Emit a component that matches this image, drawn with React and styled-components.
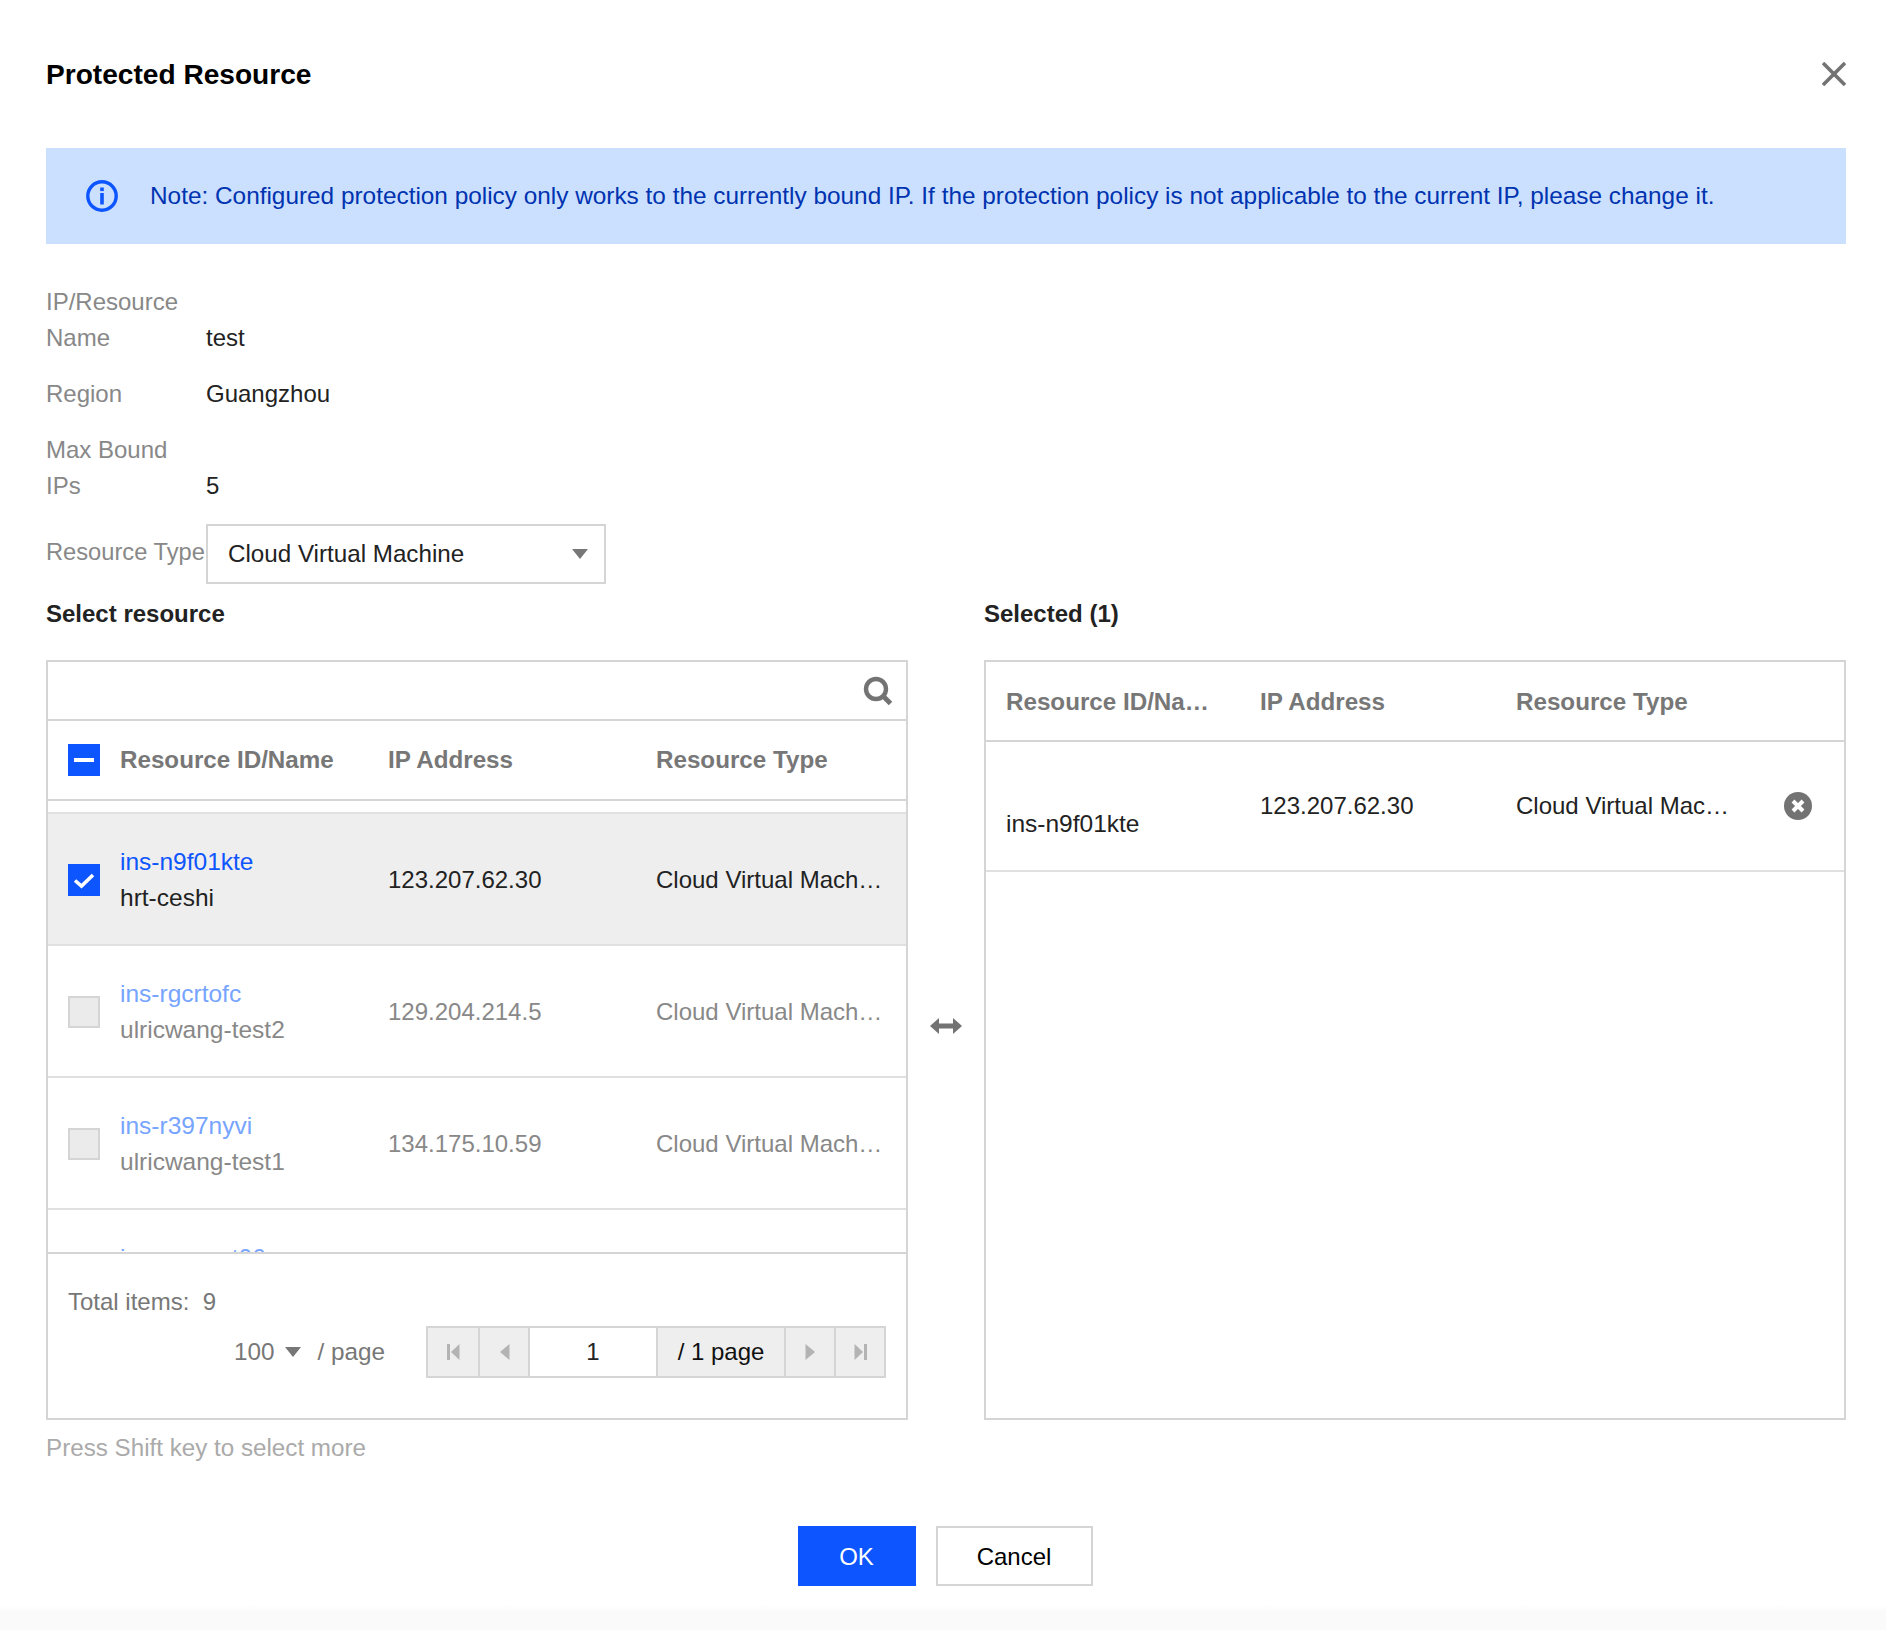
import React from "react";
import styled, { createGlobalStyle } from "styled-components";

const Global = createGlobalStyle`
  html, body { margin: 0; padding: 0; background: #fff; }
  body { font-family: "Liberation Sans", Arial, sans-serif; font-size: 24px; line-height: 36px; color: #222; }
  * { box-sizing: border-box; }
`;

const BORDER = "#d5d5d5";
const BLUE = "#0d55ff";

const Page = styled.div`
  width: 1886px;
  height: 1630px;
  padding: 0 40px 0 46px;
  background: linear-gradient(#fff 1605px, #fafafa 1612px);
  overflow: hidden;
`;
const Header = styled.header`
  height: 148px;
  display: flex;
  justify-content: space-between;
  align-items: flex-start;
  padding-top: 57px;
`;
const Title = styled.h1`
  margin: 0;
  font-size: 28.1px;
  line-height: 36px;
  font-weight: 700;
  color: #000;
`;
const CloseBtn = styled.button`
  border: 0;
  background: none;
  padding: 0;
  margin: 5px 0 0 0;
  width: 24px;
  height: 24px;
  display: block;
  svg { display: block; }
`;
const Notice = styled.div`
  width: 1800px;
  height: 96px;
  background: #cbe0ff;
  color: #0033b0;
  font-size: 24.37px;
  display: flex;
  align-items: center;
  gap: 32px;
  padding-left: 40px;
  svg { flex: none; }
`;
const InfoList = styled.dl`
  margin: 40px 0 0 0;
  display: grid;
  grid-template-columns: 160px 1fr;
  row-gap: 20px;
  align-items: end;
`;
const Label = styled.dt`
  margin: 0;
  color: #888;
  width: 140px;
`;
const SelectLabel = styled(Label)`
  align-self: center;
  white-space: nowrap;
  font-size: 23.7px;
  margin-top: -4px;
`;
const Value = styled.dd`
  margin: 0;
  color: #222;
`;
const Select = styled.div`
  width: 400px;
  height: 60px;
  border: 2px solid ${BORDER};
  display: flex;
  align-items: center;
  justify-content: space-between;
  padding: 0 16px 0 20px;
  font-size: 24.2px;
  color: #222;
`;
const Columns = styled.div`
  width: 1800px;
  margin-top: 12px;
  display: grid;
  grid-template-columns: 862px 76px 862px;
`;
const Side = styled.section`
  display: flex;
  flex-direction: column;
`;
const SideTitle = styled.h2`
  margin: 0 0 28px 0;
  font-size: 24px;
  line-height: 36px;
  font-weight: 700;
  color: #222;
`;
const Panel = styled.div`
  height: 760px;
  border: 2px solid ${BORDER};
  display: flex;
  flex-direction: column;
`;
const SearchBar = styled.div`
  height: 59px;
  flex: none;
  border-bottom: 2px solid ${BORDER};
  display: flex;
  align-items: center;
  justify-content: flex-end;
  padding-right: 13px;
`;
const LeftGrid = styled.div`
  display: grid;
  grid-template-columns: 72px 268px 268px 230px;
  align-items: center;
`;
const HeadRow = styled(LeftGrid)`
  height: 80px;
  flex: none;
  border-bottom: 2px solid ${BORDER};
  color: #777;
  font-weight: 700;
  font-size: 24.2px;
`;
const List = styled.div`
  flex: 1;
  min-height: 0;
  overflow: hidden;
  padding-top: 11px;
  border-bottom: 2px solid ${BORDER};
`;
const Row = styled(LeftGrid)`
  height: ${(p) => (p.$first ? 134 : 132)}px;
  padding-top: 2px;
  border-top: ${(p) => (p.$first ? `2px solid #e0e0e0` : "0")};
  border-bottom: 2px solid #e0e0e0;
  background: ${(p) => (p.$selected ? "#eeeeee" : "#fff")};
  color: ${(p) => (p.$muted ? "#888" : "#222")};
`;
const IdCell = styled.div`
  display: flex;
  flex-direction: column;
  font-size: 24.5px;
`;
const IdLink = styled.span`
  color: ${(p) => (p.$muted ? "#76a4ff" : BLUE)};
`;
const IdName = styled.span`
  min-height: 36px;
`;
const TypeCell = styled.div`
  overflow: hidden;
  white-space: nowrap;
  text-overflow: ellipsis;
  min-width: 0;
`;
const CheckCell = styled.div`
  padding-left: 20px;
  display: flex;
`;
const Check = styled.span`
  width: 32px;
  height: 32px;
  display: flex;
  align-items: center;
  justify-content: center;
  background: ${(p) => (p.$disabled ? "#ebebeb" : BLUE)};
  border: ${(p) => (p.$disabled ? `2px solid ${BORDER}` : "0")};
`;
const Footer = styled.div`
  flex: none;
  height: 164px;
  padding: 30px 20px 0 20px;
  color: #777;
`;
const Total = styled.div`
  height: 36px;
`;
const PagerLine = styled.div`
  margin-top: 6px;
  display: flex;
  align-items: center;
  justify-content: flex-end;
`;
const PageSize = styled.div`
  display: flex;
  align-items: center;
  margin-right: 41px;
  font-size: 24.3px;
`;
const SizeValue = styled.span`
  margin-right: 11px;
`;
const SizeSuffix = styled.span`
  margin-left: 16px;
`;
const Pager = styled.div`
  display: flex;
  height: 52px;
  border: 2px solid ${BORDER};
  background: #eee;
`;
const PageBtn = styled.span`
  width: ${(p) => p.$w || 50}px;
  height: 100%;
  flex: none;
  display: flex;
  align-items: center;
  justify-content: center;
  border-left: ${(p) => (p.$first ? "0" : `2px solid ${BORDER}`)};
`;
const PageInput = styled(PageBtn)`
  background: #fff;
  color: #222;
`;
const PageText = styled(PageBtn)`
  color: #111;
`;
const SwapCell = styled.div`
  display: flex;
  align-items: flex-start;
  justify-content: center;
  padding-top: 422px;
`;
const RightGrid = styled.div`
  display: grid;
  grid-template-columns: 254px 256px 215px 1fr;
  padding-left: 20px;
  align-items: center;
`;
const RightHead = styled(RightGrid)`
  height: 80px;
  flex: none;
  padding-top: 2px;
  border-bottom: 2px solid ${BORDER};
  color: #777;
  font-weight: 700;
  font-size: 24.2px;
`;
const RightRow = styled(RightGrid)`
  height: 130px;
  flex: none;
  border-bottom: 2px solid #e0e0e0;
  color: #222;
`;
const HeadId = styled.div`
  max-width: 206px;
  overflow: hidden;
  white-space: nowrap;
  text-overflow: ellipsis;
`;
const RowId = styled.div`
  padding-top: 36px;
  font-size: 24.5px;
`;
const RemoveCell = styled.div`
  padding-left: 53px;
  display: flex;
  svg { display: block; }
`;
const Tip = styled.p`
  margin: 10px 0 0 0;
  color: #aaa;
  font-size: 24.2px;
`;
const Actions = styled.div`
  margin-top: 60px;
  width: 1800px;
  display: flex;
  justify-content: center;
  gap: 20px;
  padding-right: 2px;
`;
const Button = styled.button`
  height: 60px;
  width: ${(p) => p.$w}px;
  font: inherit;
  padding: 2px 0 0 0;
  cursor: pointer;
  border: ${(p) => (p.$primary ? "0" : `2px solid ${BORDER}`)};
  background: ${(p) => (p.$primary ? BLUE : "#fff")};
  color: ${(p) => (p.$primary ? "#fff" : "#000")};
`;

const DownArrow = () => (
  <svg width="16" height="10" viewBox="0 0 16 10">
    <polygon points="0,0 16,0 8,10" fill="#777" />
  </svg>
);
const PgIcon = ({ kind }) => {
  const c = "#b3b3b3";
  const icons = {
    first: <><rect x="0" y="1" width="3" height="16" fill={c} /><polygon points="12.5,1 12.5,17 4,9" fill={c} /></>,
    prev: <polygon points="11.5,1 11.5,17 2,9" fill={c} />,
    next: <polygon points="1.5,1 1.5,17 11,9" fill={c} />,
    last: <><polygon points="0.5,1 0.5,17 9,9" fill={c} /><rect x="10" y="1" width="3" height="16" fill={c} /></>,
  };
  return <svg width="13" height="18" viewBox="0 0 13 18">{icons[kind]}</svg>;
};
const CheckMark = () => (
  <svg width="22" height="18" viewBox="0 0 22 18">
    <path d="M2 9.5 L8.5 15 L20 4" fill="none" stroke="#fff" strokeWidth="3.6" />
  </svg>
);
const Dash = () => (
  <svg width="20" height="4" viewBox="0 0 20 4"><rect width="20" height="4" fill="#fff" /></svg>
);

const rows = [
  { id: "ins-rgcrtofc", name: "ulricwang-test2", ip: "129.204.214.5", type: "Cloud Virtual Machine" },
  { id: "ins-r397nyvi", name: "ulricwang-test1", ip: "134.175.10.59", type: "Cloud Virtual Machine" },
  { id: "ins-moaxct06", name: "", ip: "", type: "" },
];

export default function App() {
  return (
    <>
      <Global />
      <Page>
        <Header>
          <Title>Protected Resource</Title>
          <CloseBtn aria-label="Close">
            <svg width="24" height="24" viewBox="0 0 24 24">
              <path d="M1 1 L23 23 M23 1 L1 23" stroke="#737373" strokeWidth="3.6" fill="none" />
            </svg>
          </CloseBtn>
        </Header>
        <Notice>
          <svg width="32" height="32" viewBox="0 0 32 32">
            <circle cx="16" cy="16" r="14.2" fill="none" stroke={BLUE} strokeWidth="3.4" />
            <rect x="14.2" y="7.5" width="3.6" height="3.6" fill={BLUE} />
            <rect x="14.2" y="13" width="3.6" height="11.5" fill={BLUE} />
          </svg>
          <span>Note: Configured protection policy only works to the currently bound IP. If the protection policy is not applicable to the current IP, please change it.</span>
        </Notice>
        <InfoList>
          <Label>IP/Resource Name</Label>
          <Value>test</Value>
          <Label>Region</Label>
          <Value>Guangzhou</Value>
          <Label>Max Bound IPs</Label>
          <Value>5</Value>
          <SelectLabel>Resource Type</SelectLabel>
          <Value>
            <Select>
              <span>Cloud Virtual Machine</span>
              <DownArrow />
            </Select>
          </Value>
        </InfoList>
        <Columns>
          <Side>
            <SideTitle>Select resource</SideTitle>
            <Panel>
              <SearchBar>
                <svg width="30" height="30" viewBox="0 0 30 30">
                  <circle cx="13" cy="13" r="10" fill="none" stroke="#737373" strokeWidth="4.4" />
                  <path d="M20 20 L27.5 27.5" stroke="#737373" strokeWidth="5" />
                </svg>
              </SearchBar>
              <HeadRow>
                <CheckCell><Check><Dash /></Check></CheckCell>
                <div>Resource ID/Name</div>
                <div>IP Address</div>
                <div>Resource Type</div>
              </HeadRow>
              <List>
                <Row $selected $first>
                  <CheckCell><Check><CheckMark /></Check></CheckCell>
                  <IdCell>
                    <IdLink>ins-n9f01kte</IdLink>
                    <IdName>hrt-ceshi</IdName>
                  </IdCell>
                  <div>123.207.62.30</div>
                  <TypeCell>Cloud Virtual Machine</TypeCell>
                </Row>
                {rows.map((r) => (
                  <Row key={r.id} $muted>
                    <CheckCell><Check $disabled /></CheckCell>
                    <IdCell>
                      <IdLink $muted>{r.id}</IdLink>
                      <IdName>{r.name}</IdName>
                    </IdCell>
                    <div>{r.ip}</div>
                    <TypeCell>{r.type}</TypeCell>
                  </Row>
                ))}
              </List>
              <Footer>
                <Total>Total items:&nbsp; 9</Total>
                <PagerLine>
                  <PageSize>
                    <SizeValue>100</SizeValue>
                    <DownArrow />
                    <SizeSuffix>/ page</SizeSuffix>
                  </PageSize>
                  <Pager>
                    <PageBtn $first><PgIcon kind="first" /></PageBtn>
                    <PageBtn><PgIcon kind="prev" /></PageBtn>
                    <PageInput $w={128}>1</PageInput>
                    <PageText $w={128}>/ 1 page</PageText>
                    <PageBtn><PgIcon kind="next" /></PageBtn>
                    <PageBtn><PgIcon kind="last" /></PageBtn>
                  </Pager>
                </PagerLine>
              </Footer>
            </Panel>
          </Side>
          <SwapCell>
            <svg width="32" height="16" viewBox="0 0 32 16">
              <path d="M0 8 L9 0 V5.5 H23 V0 L32 8 L23 16 V10.5 H9 V16 Z" fill="#737373" />
            </svg>
          </SwapCell>
          <Side>
            <SideTitle>Selected (1)</SideTitle>
            <Panel>
              <RightHead>
                <HeadId>Resource ID/Name</HeadId>
                <div>IP Address</div>
                <div>Resource Type</div>
              </RightHead>
              <RightRow>
                <RowId>ins-n9f01kte</RowId>
                <div>123.207.62.30</div>
                <TypeCell>Cloud Virtual Machine</TypeCell>
                <RemoveCell>
                  <svg width="28" height="28" viewBox="0 0 28 28">
                    <circle cx="14" cy="14" r="14" fill="#737373" />
                    <path d="M9 9 L19 19 M19 9 L9 19" stroke="#fff" strokeWidth="4" />
                  </svg>
                </RemoveCell>
              </RightRow>
            </Panel>
          </Side>
        </Columns>
        <Tip>Press Shift key to select more</Tip>
        <Actions>
          <Button $primary $w={118}>OK</Button>
          <Button $w={157}>Cancel</Button>
        </Actions>
      </Page>
    </>
  );
}
